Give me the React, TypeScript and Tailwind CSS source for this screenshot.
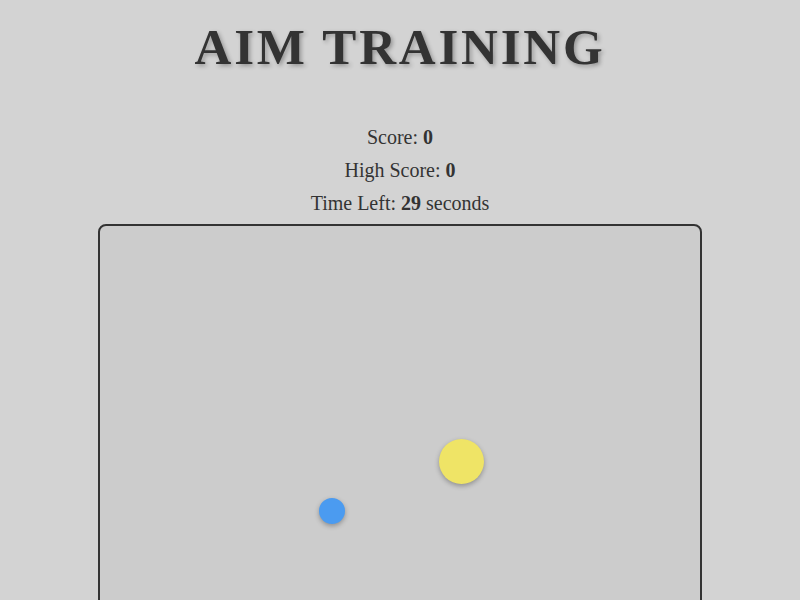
import React, { useState } from 'react';

interface Target {
  id: number;
  left: number;
  top: number;
  size: number;
  color: string;
}

export default function App() {
  const [score] = useState(0);
  const [highScore] = useState(0);
  const [timeLeft] = useState(29);

  // Targets currently on the board
  const targets: Target[] = [
    { id: 1, left: 339, top: 213, size: 45, color: '#efe466' },
    { id: 2, left: 219, top: 272, size: 26, color: '#4b9bf0' },
  ];

  return (
    <div className="min-h-screen bg-[#d3d3d3] text-[#333] font-['Liberation_Serif',serif] flex flex-col items-center overflow-hidden">
      <h1 className="mt-[17px] text-[51px] leading-[60px] font-bold tracking-[2.8px] [text-shadow:2px_2px_4px_rgba(0,0,0,0.3)]">
        AIM TRAINING
      </h1>

      <div className="mt-[49px] flex flex-col items-center gap-[10px] text-[20px] leading-[23px]">
        <p>
          Score: <span className="font-bold">{score}</span>
        </p>
        <p>
          High Score: <span className="font-bold">{highScore}</span>
        </p>
        <p>
          Time Left: <span className="font-bold">{timeLeft}</span> seconds
        </p>
      </div>

      <div className="relative mt-[9px] w-[604px] h-[400px] shrink-0 bg-[#cccccc] border-2 border-[#333] rounded-[8px]">
        {targets.map((t) => (
          <div
            key={t.id}
            className="absolute rounded-full shadow-[0_2px_5px_rgba(0,0,0,0.3)]"
            style={{ left: t.left, top: t.top, width: t.size, height: t.size, backgroundColor: t.color }}
          />
        ))}
      </div>
    </div>
  );
}
